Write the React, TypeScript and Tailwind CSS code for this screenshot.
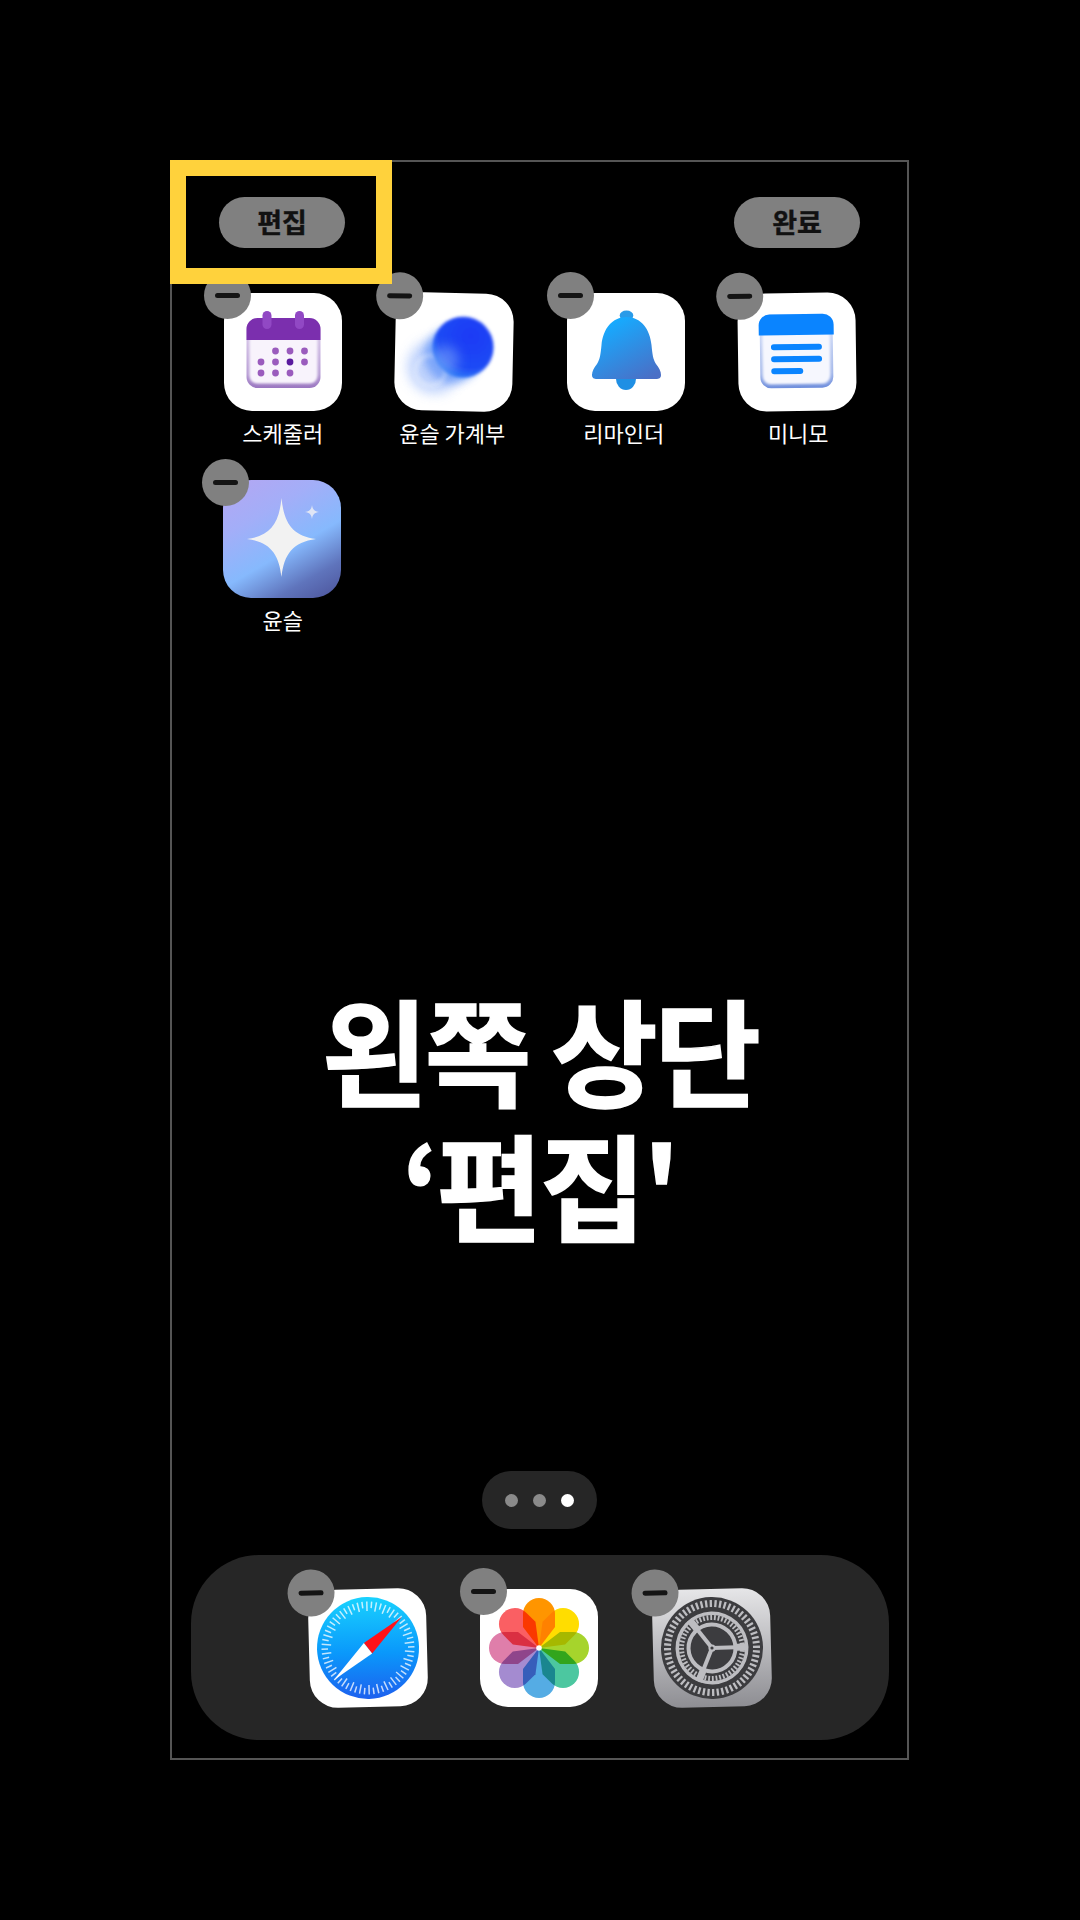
import React from "react";

const FONT = "font-['Noto_Sans_CJK_KR','Noto_Sans',sans-serif]";

function Badge({ tilt = "", offset = "" }: { tilt?: string; offset?: string }) {
  return (
    <div className={`absolute -left-[20px] -top-[21px] w-[47px] h-[47px] rounded-full bg-[#808080] flex items-center justify-center ${offset}`}>
      <div className={`w-[25px] h-[5px] rounded-full bg-[#141414] ${tilt}`} />
    </div>
  );
}

function CalendarArt() {
  const dots: [number, number, boolean?][] = [
    [51.5, 58], [66, 58], [80.5, 58],
    [37, 69], [51.5, 69], [66, 69, true], [80.5, 69],
    [37, 80], [51.5, 80], [66, 80],
  ];
  return (
    <svg viewBox="0 0 118 118" className="w-full h-full">
      <defs>
        <linearGradient id="calb" x1="0" y1="0" x2="0" y2="1">
          <stop offset="0" stopColor="#e4d8f0" />
          <stop offset="0.8" stopColor="#b99fd6" />
          <stop offset="1" stopColor="#9a76c0" />
        </linearGradient>
        <filter id="calf" x="-10%" y="-10%" width="120%" height="120%"><feGaussianBlur stdDeviation="0.9" /></filter>
      </defs>
      <rect x="22.5" y="25" width="74" height="70" rx="11" fill="url(#calb)" />
      <rect x="25.5" y="40" width="68" height="50.5" rx="8" fill="#f8f3fc" filter="url(#calf)" />
      <path d="M22.5 47 V36 a11 11 0 0 1 11 -11 h52 a11 11 0 0 1 11 11 V47 Z" fill="#7b2fae" />
      <rect x="38.5" y="18" width="9" height="18" rx="4.5" fill="#9148c4" />
      <rect x="71" y="18" width="9" height="18" rx="4.5" fill="#9148c4" />
      {dots.map(([x, y, dark], i) => (
        <circle key={i} cx={x} cy={y} r="3.4" fill={dark ? "#5a1a9e" : "#9a5bbd"} />
      ))}
    </svg>
  );
}

function BlobArt() {
  return (
    <svg viewBox="0 0 118 118" className="w-full h-full">
      <defs>
        <radialGradient id="blobA" cx="0.62" cy="0.32" r="0.75">
          <stop offset="0" stopColor="#1b3af5" />
          <stop offset="0.7" stopColor="#1f4af5" />
          <stop offset="1" stopColor="#2f86f7" />
        </radialGradient>
        <filter id="blur1" x="-50%" y="-50%" width="200%" height="200%"><feGaussianBlur stdDeviation="6" /></filter>
        <filter id="blur2" x="-50%" y="-50%" width="200%" height="200%"><feGaussianBlur stdDeviation="1.4" /></filter>
        <filter id="blur3" x="-50%" y="-50%" width="200%" height="200%"><feGaussianBlur stdDeviation="2" /></filter>
        <filter id="blur4" x="-50%" y="-50%" width="200%" height="200%"><feGaussianBlur stdDeviation="4" /></filter>
      </defs>
      <circle cx="40" cy="74" r="27" fill="#b4cbfc" opacity="0.85" filter="url(#blur1)" />
      <circle cx="58" cy="62" r="28" fill="#5f92f8" opacity="0.75" filter="url(#blur4)" />
      <circle cx="36" cy="78" r="15" fill="none" stroke="#ffffff" strokeWidth="3" opacity="0.45" filter="url(#blur3)" />
      <circle cx="68" cy="54" r="30.5" fill="url(#blobA)" filter="url(#blur2)" />
      <circle cx="50" cy="67" r="14" fill="#8ab0fa" opacity="0.5" filter="url(#blur1)" />
    </svg>
  );
}

function BellArt() {
  return (
    <svg viewBox="0 0 118 118" className="w-full h-full">
      <defs>
        <linearGradient id="bell" x1="0.25" y1="0.1" x2="0.8" y2="1">
          <stop offset="0" stopColor="#16abff" />
          <stop offset="1" stopColor="#4a6fc6" />
        </linearGradient>
      </defs>
      <ellipse cx="59.5" cy="22.5" rx="6.8" ry="5" fill="#2a9be8" />
      <path d="M49 86 h20 a10 11 0 0 1 -20 0 Z" fill="#1f8fe4" />
      <path d="M59.5 24 C45 24 36 36 34.5 52 C33.5 62 33 66 30 71 C27 75 25 78 25 82 C25 85 27 86 30 86 L89 86 C92 86 94 85 94 82 C94 78 92 75 89 71 C86 66 85.5 62 84.5 52 C83 36 74 24 59.5 24 Z" fill="url(#bell)" />
    </svg>
  );
}

function MemoArt() {
  return (
    <svg viewBox="0 0 118 118" className="w-full h-full">
      <defs>
        <linearGradient id="memob" x1="0" y1="0" x2="0" y2="1">
          <stop offset="0" stopColor="#e0e8fb" />
          <stop offset="0.8" stopColor="#a4b8ea" />
          <stop offset="1" stopColor="#6f8edc" />
        </linearGradient>
        <filter id="memof" x="-10%" y="-10%" width="120%" height="120%"><feGaussianBlur stdDeviation="0.9" /></filter>
      </defs>
      <rect x="22" y="21" width="73" height="74" rx="11" fill="url(#memob)" />
      <rect x="24.5" y="36" width="67.5" height="55" rx="8" fill="#f6f7fe" filter="url(#memof)" />
      <path d="M21 42 V32 a11 11 0 0 1 11 -11 h53 a11 11 0 0 1 11 11 V42 Z" fill="#0a84ff" />
      <rect x="33" y="51" width="51" height="6" rx="3" fill="#0a84ff" />
      <rect x="33" y="63" width="51" height="6" rx="3" fill="#0a84ff" />
      <rect x="33" y="75" width="32" height="6" rx="3" fill="#0a84ff" />
    </svg>
  );
}

function SparkleArt() {
  return (
    <svg viewBox="0 0 118 118" className="w-full h-full">
      <path d="M58.5 18 C61 44 70 56 93 59 C70 62 61 74 58.5 97 C56 74 47 62 24 59 C47 56 56 44 58.5 18 Z" fill="#f2f2f2" />
      <path d="M89 25 C89.6 29.5 91.5 31.5 96 32 C91.5 32.5 89.6 34.5 89 39 C88.4 34.5 86.5 32.5 82 32 C86.5 31.5 88.4 29.5 89 25 Z" fill="#dfe5f5" />
    </svg>
  );
}

function SafariArt() {
  const ticks = Array.from({ length: 60 }, (_, i) => i * 6);
  return (
    <svg viewBox="0 0 118 118" className="w-full h-full">
      <defs>
        <linearGradient id="saf" x1="0" y1="0" x2="0" y2="1">
          <stop offset="0" stopColor="#19d2fe" />
          <stop offset="0.55" stopColor="#0a98fb" />
          <stop offset="1" stopColor="#1d60ee" />
        </linearGradient>
      </defs>
      <circle cx="59" cy="59" r="51" fill="url(#saf)" />
      {ticks.map((a, i) => (
        <line
          key={a}
          x1="59"
          y1="12.5"
          x2="59"
          y2={i % 2 === 0 ? 22 : 19}
          stroke="#ffffff"
          strokeOpacity="0.75"
          strokeWidth="1.5"
          transform={`rotate(${a} 59 59)`}
        />
      ))}
      <polygon points="93.5,29 55,54 63,64.5" fill="#ff1218" />
      <polygon points="24,90 55,54 63,64.5" fill="#ffffff" />
    </svg>
  );
}

function PhotosArt() {
  const colors = ["#ff9500", "#ffdd00", "#a6d42c", "#4cc7a0", "#55ace4", "#a48bd0", "#df7eaa", "#fa5f63"];
  return (
    <svg viewBox="0 0 118 118" className="w-full h-full" style={{ isolation: "isolate" }}>
      {colors.map((c, i) => (
        <path
          key={c}
          d="M0 0 L-16 -21 V-34 A16 16 0 0 1 16 -34 V-21 Z"
          fill={c}
          className="mix-blend-multiply"
          transform={`translate(59 59) rotate(${i * 45})`}
        />
      ))}
      <circle cx="59" cy="59" r="2.8" fill="#ffffff" />
    </svg>
  );
}

function SettingsArt() {
  const cx = 59;
  const cy = 59;
  const outer = Array.from({ length: 60 }, (_, i) => i * 6);
  const inner = Array.from({ length: 52 }, (_, i) => i * (360 / 52));
  const dark = "#3c3c3f";
  const light = "#bdbdc1";
  return (
    <svg viewBox="0 0 118 118" className="w-full h-full">
      <circle cx={cx} cy={cy} r="51" fill={dark} />
      {outer.map((a) => (
        <line key={a} x1={cx} y1={cy - 48} x2={cx} y2={cy - 41} stroke={light} strokeWidth="2.3" transform={`rotate(${a} ${cx} ${cy})`} />
      ))}
      <circle cx={cx} cy={cy} r="36.5" fill={light} />
      <circle cx={cx} cy={cy} r="33" fill={dark} />
      {inner.map((a) => (
        <line key={a} x1={cx} y1={cy - 33} x2={cx} y2={cy - 28} stroke={light} strokeWidth="1.8" transform={`rotate(${a} ${cx} ${cy})`} />
      ))}
      <circle cx={cx} cy={cy} r="25.5" fill={light} />
      <circle cx={cx} cy={cy} r="21.5" fill={dark} />
      {[90, 203, 323].map((a) => (
        <g key={a} transform={`rotate(${a} ${cx} ${cy})`}>
          <line x1={cx} y1={cy} x2={cx} y2={cy - 24} stroke={light} strokeWidth="4" />
          <line x1={cx} y1={cy - 24} x2={cx} y2={cy - 36} stroke={light} strokeWidth="7" />
        </g>
      ))}
      <circle cx={cx} cy={cy} r="3.6" fill={light} />
      <circle cx={cx} cy={cy} r="1.6" fill={dark} />
    </svg>
  );
}

function AppIcon({
  children,
  bg = "bg-white",
  tilt = "",
  barTilt = "",
  offset = "",
}: {
  children: React.ReactNode;
  bg?: string;
  tilt?: string;
  barTilt?: string;
  offset?: string;
}) {
  return (
    <div className={`relative w-[118px] h-[118px] ${tilt}`}>
      <div className={`w-full h-full rounded-[28px] overflow-hidden ${bg}`}>{children}</div>
      <Badge tilt={barTilt} offset={offset} />
    </div>
  );
}

function Cell({ label, shift = "", children }: { label: string; shift?: string; children: React.ReactNode }) {
  return (
    <div className="h-[187px] flex flex-col items-center">
      {children}
      <div className={`mt-[5px] text-[22px] leading-[32px] text-white whitespace-nowrap ${shift}`}>{label}</div>
    </div>
  );
}

export default function App() {
  return (
    <div className={`w-[1080px] h-[1920px] bg-black pt-[160px] pl-[170px] ${FONT}`}>
      <div className="relative w-[739px] h-[1600px] border-2 border-[#555555] flex flex-col">
        <div className="flex justify-between pl-[47px] pr-[47px] pt-[35px]">
          <div className="w-[126px] h-[51px] rounded-full bg-[#808080] flex items-center justify-center text-[27px] font-bold [-webkit-text-stroke:0.4px_#111111] text-[#111111]">편집</div>
          <div className="w-[126px] h-[51px] rounded-full bg-[#808080] flex items-center justify-center text-[27px] font-bold [-webkit-text-stroke:0.4px_#111111] text-[#111111]">완료</div>
        </div>

        <div className="mt-[45px] ml-[25px] grid grid-cols-[repeat(4,171.5px)]">
          <Cell label="스케줄러">
            <AppIcon><CalendarArt /></AppIcon>
          </Cell>
          <Cell label="윤슬 가계부" shift="-translate-x-[2px]">
            <AppIcon tilt="rotate-[1.2deg]" offset="translate-y-[1.5px]"><BlobArt /></AppIcon>
          </Cell>
          <Cell label="리마인더" shift="-translate-x-[2px]">
            <AppIcon><BellArt /></AppIcon>
          </Cell>
          <Cell label="미니모" shift="translate-x-[1px]">
            <AppIcon tilt="-rotate-[0.8deg]" offset="-translate-x-[1px]"><MemoArt /></AppIcon>
          </Cell>
          <Cell label="윤슬">
            <AppIcon tilt="-translate-x-[1px]" offset="-translate-x-[1px]" bg="bg-[linear-gradient(150deg,#b5a6f2_0%,#a3aef8_30%,#86b9fd_58%,#5f74bc_80%,#4b5299_100%)]"><SparkleArt /></AppIcon>
          </Cell>
        </div>

        <div className="mt-[313px] flex flex-col items-center text-white font-bold [-webkit-text-stroke:1.5px_#ffffff] text-[116px] leading-[135px] tracking-[-0.03em] whitespace-nowrap">
          <div>왼쪽 상단</div>
          <div>‘편집'</div>
        </div>

        <div className="mt-auto self-center w-[115px] h-[58px] rounded-full bg-[#262626] flex items-center justify-center gap-[15px]">
          <div className="w-[13px] h-[13px] rounded-full bg-[#8a8a8a]" />
          <div className="w-[13px] h-[13px] rounded-full bg-[#8a8a8a]" />
          <div className="w-[13px] h-[13px] rounded-full bg-white" />
        </div>

        <div className="mt-[26px] mb-[18px] ml-[19px] w-[698px] h-[185px] rounded-[68px] bg-[#262626] flex items-center justify-center gap-[54px]">
          <AppIcon tilt="-rotate-[1.5deg]"><SafariArt /></AppIcon>
          <AppIcon tilt="-translate-x-[1px]"><PhotosArt /></AppIcon>
          <AppIcon tilt="-rotate-[1.5deg]" bg="bg-[linear-gradient(180deg,#e6e6e8_0%,#8e8e93_100%)]"><SettingsArt /></AppIcon>
        </div>

        <div className="absolute -left-[2px] -top-[2px] w-[222px] h-[124px] border-[16px] border-[#ffd23c]" />
      </div>
    </div>
  );
}
